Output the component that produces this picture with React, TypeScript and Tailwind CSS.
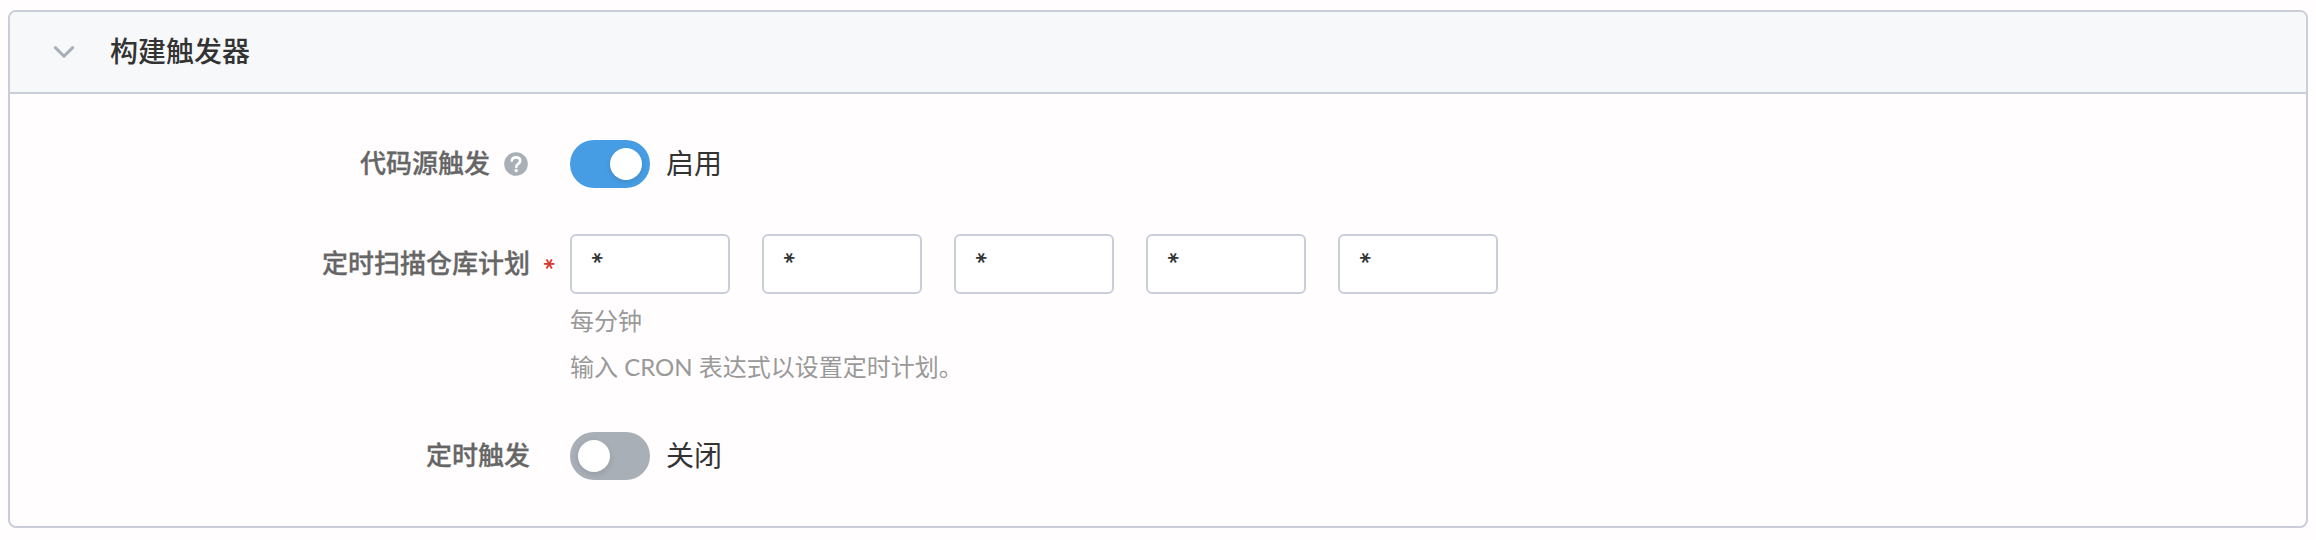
import type { ReactNode } from 'react';

function Toggle({ on, label }: { on: boolean; label: string }) {
  return (
    <div className="flex h-12 items-center">
      <button
        type="button"
        role="switch"
        aria-checked={on}
        className={
          on
            ? 'flex h-12 w-20 items-center justify-end rounded-full bg-[#479de4] px-2'
            : 'flex h-12 w-20 items-center justify-start rounded-full bg-[#a9afb7] px-2'
        }
      >
        <span className="size-8 rounded-full bg-white shadow-[0_2px_6px_rgba(0,0,0,0.12)]" />
      </button>
      <span className="ml-4 pb-[2px] text-[28px] leading-[46px] text-[#333]">{label}</span>
    </div>
  );
}

function Label({ text, children }: { text: string; children?: ReactNode }) {
  return (
    <div className="flex h-12 w-[520px] shrink-0 items-center justify-end text-[26px] leading-[46px] font-medium text-[#666] [-webkit-text-stroke:0.3px_#666]">
      <span className="pb-[2px]">{text}</span>
      {children}
    </div>
  );
}

function HelpIcon() {
  return (
    <svg className="mr-[2px] ml-[14px] size-6" viewBox="0 0 24 24" fill="none">
      <circle cx="12" cy="12" r="11.8" fill="#a9afb7" />
      <path
        d="M7.8 8.7C8.2 6.6 9.8 5.4 12 5.4c2.4 0 4.2 1.4 4.2 3.5 0 2.8-3.9 3.1-3.9 6"
        stroke="#fff"
        strokeWidth="2.6"
        strokeLinecap="round"
      />
      <circle cx="12.2" cy="18.6" r="1.7" fill="#fff" />
    </svg>
  );
}

function Asterisk({ className }: { className: string }) {
  return (
    <span className={className}>
      <span className="block origin-[50%_32%] -rotate-90 text-[31px] leading-none font-bold">*</span>
    </span>
  );
}

const fields = ['minute', 'hour', 'day', 'month', 'weekday'];

export default function App() {
  return (
    <main className="h-[540px] w-[2316px] bg-[#fffdfe] px-2 pt-[10px] font-['Lato','Noto_Sans_CJK_SC',sans-serif]">
      <section className="h-[518px] w-[2300px] overflow-hidden rounded-lg border-2 border-[#cbcdd9]">
        <header className="flex h-[82px] items-center border-b-2 border-[#cbcdd9] bg-[#f6f8fa] pl-[42px]">
          <svg className="size-6 shrink-0" viewBox="0 0 24 24" fill="none">
            <path d="M3.4 7.6l8.6 8.7 8.6-8.7" stroke="#a9afb7" strokeWidth="3" strokeLinecap="round" strokeLinejoin="round" />
          </svg>
          <h2 className="ml-[34px] pb-[2px] text-[28px] leading-[38px] font-medium text-[#333]">构建触发器</h2>
        </header>
        <div className="flex flex-col pt-[46px]">
          <div className="flex gap-10">
            <Label text="代码源触发">
              <HelpIcon />
            </Label>
            <Toggle on label="启用" />
          </div>
          <div className="mt-[46px] flex">
            <div className="pt-[6px]">
              <Label text="定时扫描仓库计划" />
            </div>
            <div className="flex h-[60px] w-10 justify-center">
              <Asterisk className="pt-[20px] text-[#d9372b]" />
            </div>
            <div>
              <div className="flex gap-8">
                {fields.map((name) => (
                  <div key={name} className="flex h-[60px] w-40 rounded-md border-2 border-[#cbcdd9] bg-white pl-[19px]">
                    <Asterisk className="pt-[12px] text-[#333]" />
                  </div>
                ))}
              </div>
              <p className="mt-[9px] text-2xl leading-[36px] text-[#999]">每分钟</p>
              <p className="mt-[10px] text-2xl leading-[36px] text-[#999]">输入 CRON 表达式以设置定时计划。</p>
            </div>
          </div>
          <div className="mt-[47px] flex gap-10">
            <Label text="定时触发" />
            <Toggle on={false} label="关闭" />
          </div>
        </div>
      </section>
    </main>
  );
}
